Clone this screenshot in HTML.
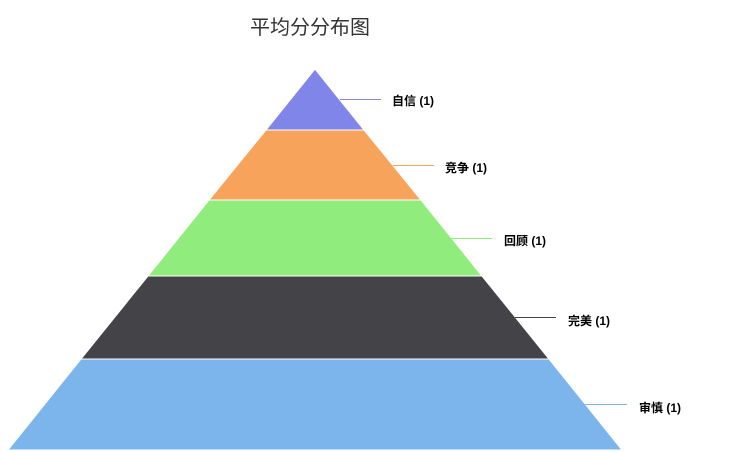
<!DOCTYPE html>
<html><head><meta charset="utf-8"><style>
html,body{margin:0;padding:0;background:#fff;}
</style></head><body>
<svg width="735" height="452" xmlns="http://www.w3.org/2000/svg" style="display:block">
<text x="310" y="34" text-anchor="middle" font-family="Liberation Sans, Noto Sans CJK SC, sans-serif" font-size="20" fill="#333">平均分分布图</text>
<g stroke="#fff" stroke-width="1">
<polygon points="315,69 364,130 266,130" fill="#8085e9"/>
<polygon points="266,130 364,130 421,200 209,200" fill="#f7a35c"/>
<polygon points="209,200 421,200 482,276 148,276" fill="#90ed7d"/>
<polygon points="148,276 482,276 549,359 81,359" fill="#434348"/>
<polygon points="81,359 549,359 622,450 8,450" fill="#7cb5ec"/>
</g>
<g stroke-width="1">
<line x1="340" y1="99.5" x2="381" y2="99.5" stroke="#8085e9"/>
<line x1="393" y1="165.5" x2="434" y2="165.5" stroke="#f7a35c"/>
<line x1="451" y1="238.5" x2="492" y2="238.5" stroke="#90ed7d"/>
<line x1="515" y1="317.5" x2="556" y2="317.5" stroke="#434348"/>
<line x1="585" y1="404.5" x2="627" y2="404.5" stroke="#7cb5ec"/>
</g>
<g font-family="Liberation Sans, Noto Sans CJK SC, sans-serif" font-size="12" font-weight="bold" fill="#000">
<text x="392" y="105">自信 (1)</text>
<text x="445" y="172">竞争 (1)</text>
<text x="504" y="245">回顾 (1)</text>
<text x="568" y="325">完美 (1)</text>
<text x="639" y="412">审慎 (1)</text>
</g>
</svg>
</body></html>
